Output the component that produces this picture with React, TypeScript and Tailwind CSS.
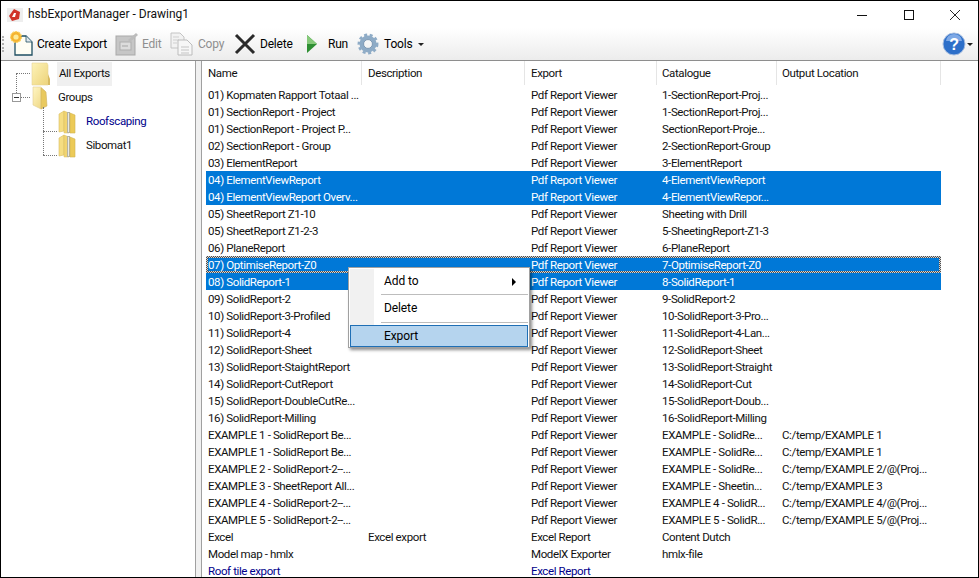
import React from "react";

const P = "Pdf Report Viewer";
type Row = [string, string, string, string, string, string?];
const rows: Row[] = [
  ["01) Kopmaten Rapport Totaal ...", "", P, "1-SectionReport-Proj...", ""],
  ["01) SectionReport - Project", "", P, "1-SectionReport-Proj...", ""],
  ["01) SectionReport - Project P...", "", P, "SectionReport-Proje...", ""],
  ["02) SectionReport - Group", "", P, "2-SectionReport-Group", ""],
  ["03) ElementReport", "", P, "3-ElementReport", ""],
  ["04) ElementViewReport", "", P, "4-ElementViewReport", "", "s"],
  ["04) ElementViewReport Overv...", "", P, "4-ElementViewRepor...", "", "s"],
  ["05) SheetReport Z1-10", "", P, "Sheeting with Drill", ""],
  ["05) SheetReport Z1-2-3", "", P, "5-SheetingReport-Z1-3", ""],
  ["06) PlaneReport", "", P, "6-PlaneReport", ""],
  ["07) OptimiseReport-Z0", "", P, "7-OptimiseReport-Z0", "", "f"],
  ["08) SolidReport-1", "", P, "8-SolidReport-1", "", "s"],
  ["09) SolidReport-2", "", P, "9-SolidReport-2", ""],
  ["10) SolidReport-3-Profiled", "", P, "10-SolidReport-3-Pro...", ""],
  ["11) SolidReport-4", "", P, "11-SolidReport-4-Lan...", ""],
  ["12) SolidReport-Sheet", "", P, "12-SolidReport-Sheet", ""],
  ["13) SolidReport-StaightReport", "", P, "13-SolidReport-Straight", ""],
  ["14) SolidReport-CutReport", "", P, "14-SolidReport-Cut", ""],
  ["15) SolidReport-DoubleCutRe...", "", P, "15-SolidReport-Doub...", ""],
  ["16) SolidReport-Milling", "", P, "16-SolidReport-Milling", ""],
  ["EXAMPLE 1 - SolidReport Be...", "", P, "EXAMPLE - SolidRe...", "C:/temp/EXAMPLE 1"],
  ["EXAMPLE 1 - SolidReport Be...", "", P, "EXAMPLE - SolidRe...", "C:/temp/EXAMPLE 1"],
  ["EXAMPLE 2 - SolidReport-2--...", "", P, "EXAMPLE - SolidRe...", "C:/temp/EXAMPLE 2/@(Proj..."],
  ["EXAMPLE 3 - SheetReport All...", "", P, "EXAMPLE - Sheetin...", "C:/temp/EXAMPLE 3"],
  ["EXAMPLE 4 - SolidReport-2--...", "", P, "EXAMPLE 4 - SolidR...", "C:/temp/EXAMPLE 4/@(Proj..."],
  ["EXAMPLE 5 - SolidReport-2--...", "", P, "EXAMPLE 5 - SolidR...", "C:/temp/EXAMPLE 5/@(Proj..."],
  ["Excel", "Excel export", "Excel Report", "Content Dutch", ""],
  ["Model map - hmlx", "", "ModelX Exporter", "hmlx-file", ""],
  ["Roof tile export", "", "Excel Report", "", "", "b"],
];

const cols = "grid grid-cols-[156px_163px_132px_120px_164px]";
const padding = ["pl-[2px]", "pl-[6px]", "pl-[6px]", "pl-[5px]", "pl-[5px]"];

function Folder({ open = false }: { open?: boolean }) {
  return open ? (
    <svg width="18" height="24" viewBox="0 0 18 24" className="shrink-0">
      <defs>
        <linearGradient id="fo" x1="0" y1="0" x2="1" y2="1">
          <stop offset="0" stopColor="#fff6c4" />
          <stop offset="1" stopColor="#ecd27a" />
        </linearGradient>
      </defs>
      <path d="M1 1h8l4 4v15l-4 3-8-4z" fill="url(#fo)" stroke="#e2cf90" strokeWidth="0.6" />
      <path d="M9 2l5 4 1 14-6 3z" fill="#e9c95e" stroke="#cfb060" strokeWidth="0.6" />
    </svg>
  ) : (
    <svg width="20" height="24" viewBox="0 0 20 24" className="shrink-0">
      <defs>
        <linearGradient id="fc" x1="0" y1="0" x2="1" y2="1">
          <stop offset="0" stopColor="#fdf3b8" />
          <stop offset="1" stopColor="#edd37a" />
        </linearGradient>
      </defs>
      <path d="M1 1h15l1 2v20H1z" fill="url(#fc)" stroke="#e6d498" strokeWidth="0.6" />
      <path d="M17 12l2 5v6h-2z" fill="#d8bb62" />
    </svg>
  );
}

function Book() {
  return (
    <svg width="18" height="24" viewBox="0 0 18 24" className="shrink-0">
      <path d="M1 4l5-3v20l-5 1z" fill="#f5dd82" stroke="#d9bd62" strokeWidth="0.6" />
      <path d="M6 1l5 2v20H6z" fill="#f1d470" stroke="#d9bd62" strokeWidth="0.5" />
      <path d="M9 2h3v21H9z" fill="#b4b3a4" />
      <path d="M10.5 3v19" stroke="#fff" strokeWidth="0.7" />
      <path d="M12 3l5 2v18h-5z" fill="#ecca58" stroke="#d2b453" strokeWidth="0.6" />
    </svg>
  );
}

function ToolBtn({ icon, label, disabled, cls }: { icon: React.ReactNode; label: string; disabled?: boolean; cls: string }) {
  return (
    <div className={`flex items-center ${cls}`}>
      {icon}
      <span className={`text-[12px] tracking-[-0.2px] ${disabled ? "text-[#8f8f8f]" : "text-black"}`}>{label}</span>
    </div>
  );
}

export default function App() {
  return (
    <div className="w-[979px] h-[578px] overflow-hidden bg-white border border-black flex flex-col text-[11.5px] tracking-[-0.38px] leading-[17px] text-[#111] [font-family:Roboto,'Open_Sans',sans-serif]">
      {/* Title bar */}
      <div className="h-[27px] shrink-0 flex items-center relative">
        <svg width="16" height="16" viewBox="0 0 16 16" className="ml-[6px] mr-[5px]">
          <rect x="0" y="1" width="16" height="14" fill="#eee" />
          <path d="M7 2 L13 5 L12 12 L5 14 L2 9z" fill="#d0342a" />
          <path d="M7 6l2 0-1 4-3 0z" fill="#fff" />
        </svg>
        <span className="text-[12px] tracking-normal">hsbExportManager - Drawing1</span>
        <div className="ml-auto flex items-center">
          <svg width="12" height="12" viewBox="0 0 12 12" className="mr-[35px]"><path d="M1 6.5h10" stroke="#111" strokeWidth="1" /></svg>
          <svg width="12" height="12" viewBox="0 0 12 12" className="mr-[34px]"><rect x="1.5" y="1.5" width="9" height="9" fill="none" stroke="#111" strokeWidth="1" /></svg>
          <svg width="12" height="12" viewBox="0 0 12 12" className="mr-[17px]"><path d="M1 1l10 10M11 1L1 11" stroke="#111" strokeWidth="0.9" /></svg>
        </div>
      </div>
      {/* Toolbar */}
      <div className="h-[33px] shrink-0 flex items-center bg-gradient-to-b from-white to-[#ececec] border-b border-[#8e8e8e] relative">
        <span className="ml-[1px] h-[16px] w-[2px] border-l-2 border-dotted border-[#b0b0b0]" />
        <ToolBtn cls="ml-[6px] w-[105px]" label="Create Export" icon={
          <svg width="24" height="26" viewBox="0 0 24 26" className="mr-[3px]">
            <path d="M5 5h11l6 6v13H5z" fill="#fffef4" stroke="#1f4f63" strokeWidth="1.3" />
            <path d="M16 5v6h6" fill="#dfe8ec" stroke="#1f4f63" strokeWidth="0.8" />
            <circle cx="6" cy="6" r="5.4" fill="#f5b32f" strokeDasharray="2 1" stroke="#fbd25c" strokeWidth="1.2" />
            <circle cx="6" cy="6" r="2.6" fill="#fdeb96" />
          </svg>
        } />
        <ToolBtn cls="w-[55px]" disabled label="Edit" icon={
          <svg width="24" height="24" viewBox="0 0 24 24" className="mr-[3px]">
            <rect x="1" y="4" width="19" height="19" fill="#c6c6c6" stroke="#a9a9a9" />
            <rect x="5" y="10" width="11" height="8" fill="#dcdcdc" stroke="#adadad" />
            <path d="M7 14h6" stroke="#a5a5a5" />
            <path d="M13 8l8-7 2 2-8 7z" fill="#bcbcbc" />
          </svg>
        } />
        <ToolBtn cls="w-[64px]" disabled label="Copy" icon={
          <svg width="24" height="24" viewBox="0 0 24 24" className="mr-[4px]">
            <path d="M1 1h9l4 4v11H1z" fill="#f2f2f2" stroke="#c4c4c4" />
            <path d="M3 5h6M3 8h6M3 11h4" stroke="#cfcfcf" />
            <path d="M8 8h9l5 5v10H8z" fill="#f6f6f6" stroke="#bcbcbc" />
            <path d="M11 15h8M11 18h8M11 21h8" stroke="#c4c4c4" />
          </svg>
        } />
        <ToolBtn cls="w-[72px]" label="Delete" icon={
          <svg width="22" height="22" viewBox="0 0 22 22" className="mr-[4px]">
            <path d="M2 2l18 18M20 2L2 20" stroke="#2a2a2a" strokeWidth="3" />
          </svg>
        } />
        <ToolBtn cls="w-[51px]" label="Run" icon={
          <svg width="12" height="20" viewBox="0 0 12 20" className="mr-[10px]">
            <path d="M1 1l10 9-10 9z" fill="#2f8f33" />
            <path d="M1 1l10 9H1z" fill="#86c97a" />
          </svg>
        } />
        <ToolBtn cls="" label="Tools" icon={
          <svg width="22" height="22" viewBox="0 0 22 22" className="mr-[5px]">
            <circle cx="11" cy="11" r="6.5" fill="none" stroke="#8eabc6" strokeWidth="4" />
            <circle cx="11" cy="11" r="9.2" fill="none" stroke="#8eabc6" strokeWidth="2.5" strokeDasharray="3 2.6" />
            <circle cx="11" cy="11" r="4.4" fill="none" stroke="#5f7f9f" strokeWidth="0.7" />
          </svg>
        } />
        <span className="ml-[6px] w-0 h-0 border-x-[3px] border-x-transparent border-t-[3px] border-t-[#222]" />
        <div className="ml-auto mr-[5px] flex items-center">
          <svg width="24" height="24" viewBox="0 0 24 24">
            <circle cx="12" cy="12" r="11" fill="#2d6fc9" stroke="#a9bfe0" />
            <path d="M4 9a8 7 0 0116 0z" fill="#7ea9e6" />
            <text x="12" y="18" textAnchor="middle" fontSize="16" fontWeight="700" fill="#fff" fontFamily="Liberation Sans">?</text>
          </svg>
          <span className="ml-[1px] w-0 h-0 border-x-[3px] border-x-transparent border-t-[3px] border-t-[#222]" />
        </div>
      </div>
      {/* Body */}
      <div className="flex-1 min-h-0 flex bg-[#f0f0f0]">
        {/* Tree */}
        <div className="w-[195px] shrink-0 bg-white border-r border-[#a0a0a0] relative pt-[1px]">
          <div className="flex items-center h-[24px] pl-[30px]">
            <Folder />
            <span className="ml-[6px] bg-[#f0f0f0] pl-[2px] pr-[2px] h-[24px] leading-[22px]">All Exports</span>
          </div>
          <div className="flex items-center h-[24px] pl-[31px]">
            <Folder open />
            <span className="ml-[8px] mb-[2px]">Groups</span>
          </div>
          <div className="flex items-center h-[24px] pl-[57px]">
            <Book />
            <span className="ml-[10px] mb-[2px] text-[#00008b]">Roofscaping</span>
          </div>
          <div className="flex items-center h-[24px] pl-[57px]">
            <Book />
            <span className="ml-[10px] mb-[2px]">Sibomat1</span>
          </div>
          {/* tree lines */}
          <span className="absolute left-[15px] top-[12px] h-[20px] border-l border-dotted border-[#777]" />
          <span className="absolute left-[15px] top-[12px] w-[14px] border-t border-dotted border-[#777]" />
          <span className="absolute left-[42px] top-[46px] h-[48px] border-l border-dotted border-[#777]" />
          <span className="absolute left-[42px] top-[70px] w-[14px] border-t border-dotted border-[#777]" />
          <span className="absolute left-[42px] top-[94px] w-[14px] border-t border-dotted border-[#777]" />
          <span className="absolute left-[20px] top-[36px] w-[9px] border-t border-dotted border-[#777]" />
          <span className="absolute left-[11px] top-[32px] w-[9px] h-[9px] border border-[#999] bg-white flex items-center justify-center">
            <span className="w-[5px] h-px bg-[#333]" />
          </span>
        </div>
        {/* List */}
        <div className="flex-1 ml-[5px] bg-white border-l border-[#a0a0a0] overflow-hidden relative pl-[4px]">
          <div className={`${cols} h-[25px] items-start`}>
            {["Name", "Description", "Export", "Catalogue", "Output Location"].map((h, i) => (
              <div key={h} className={`h-[24px] leading-[25px] border-r border-[#e5e5e5] ${padding[i]}`}>{h}</div>
            ))}
          </div>
          <div className="w-[735px]">
            {rows.map((r, i) => {
              const st = r[5];
              const tone =
                st === "s" ? "bg-[#0078d7] text-white"
                : st === "b" ? "text-[#00008b]"
                : "";
              const cells = (
                <div className={`${cols} h-[17px] ${st === "f" ? "relative text-white" : tone}`}>
                  {r.slice(0, 5).map((c, j) => (
                    <div key={j} className={`whitespace-nowrap overflow-hidden pt-[1px] ${padding[j]}`}>{c}</div>
                  ))}
                </div>
              );
              return st === "f" ? (
                <div key={i} className="relative h-[17px] bg-[repeating-conic-gradient(#4d4d4d_0_25%,#d6d6d6_0_50%)] bg-[length:2px_2px]">
                  <div className="absolute inset-[2px] bg-[#0078d7]" />
                  {cells}
                </div>
              ) : (
                <div key={i}>{cells}</div>
              );
            })}
          </div>
          {/* Context menu */}
          <div className="absolute left-[146px] top-[206px] w-[182px] h-[81px] bg-white border border-[#a0a0a0] shadow-[2px_2px_3px_rgba(0,0,0,0.45)] text-black text-[12px] tracking-[-0.1px] p-[1px]">
            <div className="absolute left-[1px] top-[1px] bottom-[1px] w-[24px] bg-[#f1f1f1]" />
            <div className="relative h-[25px] flex items-center pl-[34px]">
              Add to
              <span className="absolute right-[12px] w-0 h-0 border-y-[4px] border-y-transparent border-l-[4px] border-l-black" />
            </div>
            <div className="relative ml-[31px] border-t border-[#bdbdbd]" />
            <div className="relative h-[27px] flex items-center pl-[34px]">Delete</div>
            <div className="relative ml-[31px] border-t border-[#bdbdbd]" />
            <div className="relative h-[22px] mt-[2px] flex items-center pl-[33px] bg-[#b5d4ee] border border-[#1f6fb5]">Export</div>
          </div>
        </div>
      </div>
    </div>
  );
}
